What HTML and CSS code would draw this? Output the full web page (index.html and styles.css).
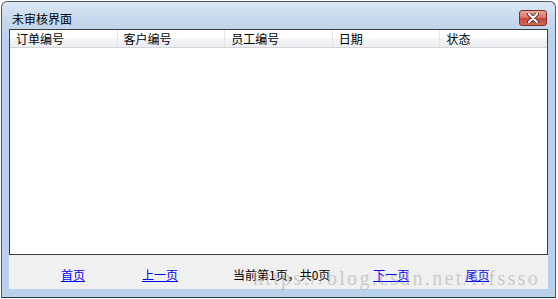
FILE: index.html
```html
<!DOCTYPE html>
<html>
<head>
    <title>未审核界面</title>
    <link rel="stylesheet" href="styles.css">
</head>
<body>
    <div class="window">
        <div class="titlebar">
            <span class="title">未审核界面</span>
            <div class="close-btn">
                <svg width="14" height="10" viewBox="0 0 14 10">
                    <path d="M3 1 L11 9 M11 1 L3 9" stroke="#5a2a24" stroke-width="4" stroke-linecap="round"/>
                    <path d="M3 1 L11 9 M11 1 L3 9" stroke="#ffffff" stroke-width="2.2" stroke-linecap="round"/>
                </svg>
            </div>
        </div>
        <div class="client">
            <div class="listview">
                <div class="list-header">
                    <div class="col">订单编号</div>
                    <div class="col">客户编号</div>
                    <div class="col">员工编号</div>
                    <div class="col">日期</div>
                    <div class="col">状态</div>
                </div>
            </div>
            <div class="pager">
                <a class="pager-link first" href="#">首页</a>
                <a class="pager-link prev" href="#">上一页</a>
                <span class="pager-info">当前第1页，共0页</span>
                <a class="pager-link next" href="#">下一页</a>
                <a class="pager-link last" href="#">尾页</a>
                <span class="watermark">https://blog.csdn.net/fffssso</span>
            </div>
        </div>
    </div>
</body>
</html>
```

FILE: styles.css
```css
body {
    margin: 0;
    background: #ffffff;
    font-family: "Noto Sans CJK SC", "Microsoft YaHei", sans-serif;
    font-size: 12px;
}

.window {
    box-sizing: border-box;
    margin: 1px 0 0 1px;
    width: 555px;
    height: 297px;
    border: 1px solid #4d5c6b;
    border-bottom-color: #1f3d4a;
    border-radius: 6px 6px 0 0;
    background: linear-gradient(to bottom, #dbe6f3 0px, #c4d7ec 20px, #b9d1ea 40px, #b9d1ea 100%);
    padding: 0 7px 8px 7px;
    display: flex;
    flex-direction: column;
}

.titlebar {
    height: 27px;
    display: flex;
    align-items: center;
    position: relative;
}

.title {
    margin-left: 3px;
    margin-top: 5px;
    color: #000000;
    font-size: 12px;
}

.close-btn {
    position: absolute;
    right: 1px;
    top: 8px;
    box-sizing: border-box;
    width: 28px;
    height: 16px;
    border: 1px solid #7a3128;
    border-radius: 3px;
    background: linear-gradient(to bottom, #e9a898 0%, #d8786a 45%, #c7443a 55%, #d36a55 100%);
    display: flex;
    align-items: center;
    justify-content: center;
}

.client {
    flex: 1;
    display: flex;
    flex-direction: column;
    background: #f0f0f0;
}

.listview {
    box-sizing: border-box;
    height: 226px;
    border: 1px solid #3c3c3c;
    background: #ffffff;
}

.list-header {
    display: flex;
    height: 17px;
    background: linear-gradient(to bottom, #ffffff 0%, #ffffff 45%, #f2f3f5 55%, #eceef1 100%);
    border-bottom: 1px solid #d5d5d5;
}

.col {
    box-sizing: border-box;
    width: 107.6px;
    padding-left: 6px;
    line-height: 17px;
    border-right: 1px solid #e2e3e5;
    color: #000000;
}

.col:last-child {
    flex: 1;
    border-right: none;
}

.pager {
    flex: 1;
    display: flex;
    align-items: center;
    position: relative;
    padding-top: 4px;
}

.pager-link {
    color: #0000ff;
    text-decoration: underline;
}

.first { margin-left: 52px; }
.prev { margin-left: 57px; }
.pager-info { margin-left: 55px; color: #000000; }
.next { margin-left: 43px; }
.last { margin-left: 56px; }

.watermark {
    position: absolute;
    left: 244px;
    top: 12px;
    font-family: "Liberation Serif", serif;
    font-size: 20px;
    letter-spacing: 2.3px;
    color: rgba(160, 160, 160, 0.5);
    white-space: nowrap;
    pointer-events: none;
}
```
